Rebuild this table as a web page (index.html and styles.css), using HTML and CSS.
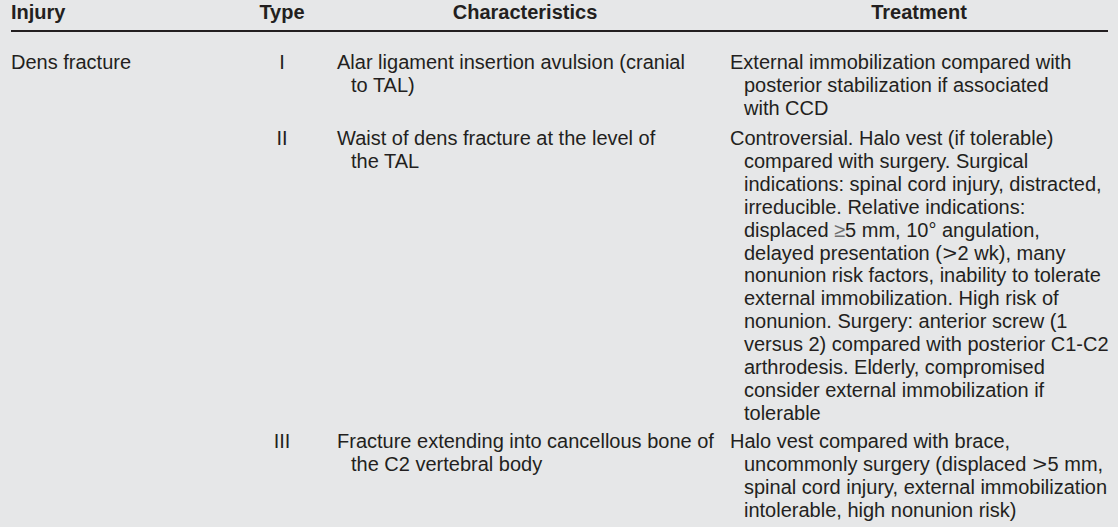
FILE: index.html
```html
<!DOCTYPE html>
<html>
<head>
<meta charset="utf-8">
<link rel="stylesheet" href="styles.css">
</head>
<body>
<table class="tbl">
  <thead>
    <tr>
      <th class="c-injury">Injury</th>
      <th class="c-type">Type</th>
      <th class="c-char">Characteristics</th>
      <th class="c-treat">Treatment</th>
    </tr>
  </thead>
  <tbody>
    <tr class="first">
      <td class="c-injury">Dens fracture</td>
      <td class="c-type">I</td>
      <td class="c-char"><div class="hang">Alar ligament insertion avulsion (cranial<br>to TAL)</div></td>
      <td class="c-treat"><div class="hang">External immobilization compared with<br>posterior stabilization if associated<br>with CCD</div></td>
    </tr>
    <tr class="second">
      <td class="c-injury"></td>
      <td class="c-type">II</td>
      <td class="c-char"><div class="hang">Waist of dens fracture at the level of<br>the TAL</div></td>
      <td class="c-treat"><div class="hang">Controversial. Halo vest (if tolerable)<br>compared with surgery. Surgical<br>indications: spinal cord injury, distracted,<br>irreducible. Relative indications:<br>displaced <span class="sym">≥</span>5 mm, 10° angulation,<br>delayed presentation (<span class="gt">&gt;</span>2 wk), many<br>nonunion risk factors, inability to tolerate<br>external immobilization. High risk of<br>nonunion. Surgery: anterior screw (1<br>versus 2) compared with posterior C1-C2<br>arthrodesis. Elderly, compromised<br>consider external immobilization if<br>tolerable</div></td>
    </tr>
    <tr>
      <td class="c-injury"></td>
      <td class="c-type">III</td>
      <td class="c-char"><div class="hang">Fracture extending into cancellous bone of<br>the C2 vertebral body</div></td>
      <td class="c-treat"><div class="hang">Halo vest compared with brace,<br>uncommonly surgery (displaced <span class="gt">&gt;</span>5 mm,<br>spinal cord injury, external immobilization<br>intolerable, high nonunion risk)</div></td>
    </tr>
  </tbody>
</table>
</body>
</html>
```

FILE: styles.css
```css
html, body {
  margin: 0;
  padding: 0;
  background: #e6e7e8;
}
body {
  padding: 1px 10px 0 11px;
  font-family: "Liberation Sans", Arial, sans-serif;
  font-size: 20px;
  line-height: 22.85px;
  color: #231f20;
}
.tbl {
  border-collapse: collapse;
  table-layout: fixed;
  width: 1097px;
}
.tbl th, .tbl td {
  padding: 0;
  vertical-align: top;
  text-align: left;
  white-space: nowrap;
}
.tbl th {
  font-weight: bold;
  padding-bottom: 6px;
  border-bottom: 2px solid #231f20;
}
.tbl th.c-char, .tbl th.c-treat { text-align: center; }
.tbl td { padding-bottom: 7px; }
.tbl tr.first td { padding-top: 19px; padding-bottom: 8px; }
.tbl tr.second td { padding-bottom: 6px; }
.c-injury { width: 221px; }
.c-type { width: 100px; text-align: center !important; }
.c-char { width: 376px; padding-left: 5px !important; }
.c-treat { width: 378px; padding-left: 17px !important; }
.hang {
  padding-left: 14px;
  text-indent: -14px;
}
.sym { color: #6d6e70; }
.gt {
  display: inline-block;
  text-indent: 0;
  transform: scaleX(1.25);
  margin: 0 2px;
}
```
